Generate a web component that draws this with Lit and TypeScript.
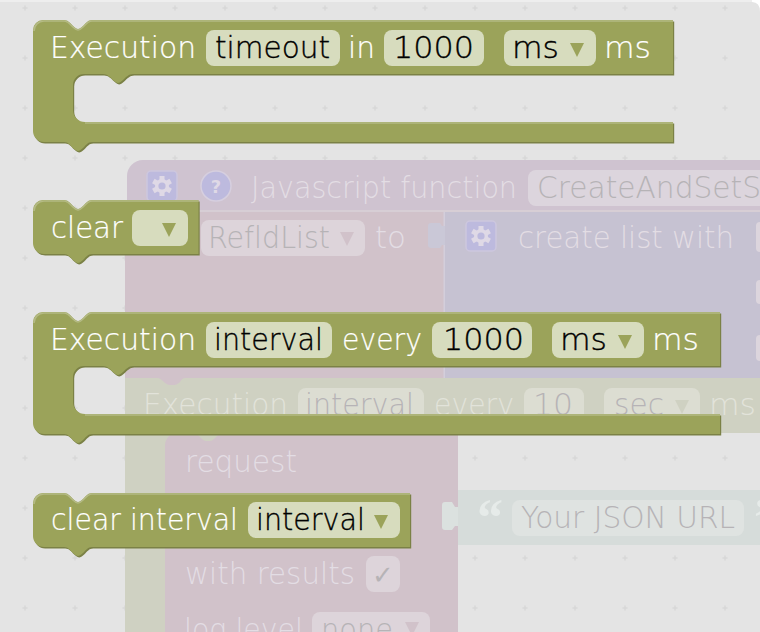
import { LitElement, html, css, svg } from "lit";
import { customElement } from "lit/decorators.js";

type Txt = [number, number, string, string, number];
type Fld = [number, number, string];

const topEdge = (y: number) =>
  `M33 ${y + 10} a10 10 0 0 1 10 -10 H64 c4 0 6 3 9 6 c2 2 4 3 5 3 c1 0 3 -1 5 -3 c3 -3 5 -6 9 -6`;
const bottomEdge = (y: number) =>
  `H92 c-4 0 -6 3 -9 6 c-2 2 -4 3 -5 3 c-1 0 -3 -1 -5 -3 c-3 -3 -5 -6 -9 -6 H44 a11 11 0 0 1 -11 -11 Z`;

const statementPath = (y: number, r: number) =>
  `${topEdge(y)} H${r} V${y + 54} H133 c-4 0 -7 3 -10 6 c-2 2 -4 3 -5 3 c-1 0 -3 -1 -5 -3 c-3 -3 -6 -6 -10 -6 H84 a11 11 0 0 0 -11 11 v25 a12 12 0 0 0 12 12 H${r} V${y + 122} ${bottomEdge(y + 122)}`;

const valuePath = (y: number, r: number) =>
  `${topEdge(y)} H${r} V${y + 54} ${bottomEdge(y + 54)}`;

const plusXs = Array.from({ length: 15 }, (_, i) => 25 + i * 50);
const plusYs = Array.from({ length: 13 }, (_, i) => 8 + i * 50);

const gear = (x: number, y: number) => svg`
  <rect class="badge" x=${x} y=${y} width="30" height="30" rx="4"></rect>
  <g transform="translate(${x + 15} ${y + 15})">
    ${[0, 60, 120].map((a) => svg`<rect class="gear-tooth" x="-2.5" y="-10" width="5" height="20" transform="rotate(${a})"></rect>`)}
    <circle class="gear-tooth" r="7"></circle>
    <circle class="gear-hole" r="3.6"></circle>
  </g>`;

const arrow = (x: number, y: number, cls: string) =>
  svg`<path class=${cls} d="M${x} ${y} h14 l-7 14 Z"></path>`;

const fields = (list: Fld[], y: number, h = 36) =>
  list.map(([x, w, cls]) => svg`<rect class=${cls} x=${x} y=${y} width=${w} height=${h} rx="8"></rect>`);

const texts = (list: Txt[]) =>
  list.map(
    ([x, y, t, cls, len]) =>
      svg`<text class=${cls} x=${x} y=${y} textLength=${len} lengthAdjust="spacingAndGlyphs">${t}</text>`,
  );

@customElement("app-root")
export class AppRoot extends LitElement {
  static styles = css`
    :host { display: block; width: 760px; height: 632px; overflow: hidden; background: #e4e4e4; }
    svg { display: block; }
    text { font-family: "DejaVu Sans", sans-serif; font-weight: 200; font-size: 29.5px; white-space: pre; font-variant-ligatures: none; }
    .bg { fill: #e4e4e4; }
    .top { fill: #eeeeee; }
    .corner { fill: #ffffff; }
    .plus { stroke: #d8d8d8; stroke-width: 1.4; fill: none; }
    .main { fill: #9ba35a; }
    .dark { fill: #7b8146; }
    .light { stroke: #b4ba84; stroke-width: 1.6; fill: none; }
    .fld { fill: #d7dcbe; }
    .arr { fill: #9ba35a; }
    .w { fill: #ffffff; stroke: #ffffff; stroke-width: 0.2; }
    .b { fill: #000000; stroke: #000000; stroke-width: 0.35; }
    .purple { fill: #cfc3d0; }
    .pink { fill: #d1c2ca; }
    .blue { fill: #c6c2d2; }
    .olive { fill: #cfd1c2; }
    .teal { fill: #d6dcda; }
    .seam { fill: #d7ced5; }
    .seam-b { fill: #d3cedb; }
    .plug { fill: #cac8d7; }
    .plug-t { fill: #dbe1df; }
    .badge { fill: #bdbade; stroke: #cdc7de; stroke-width: 1.5; }
    .gear-tooth { fill: #dfd9e6; }
    .gear-hole { fill: #bdbade; }
    .q { fill: #bdbade; stroke: #d6cfdf; stroke-width: 1.5; }
    text.qt { fill: #dfd9e6; font-weight: 700; font-size: 18px; }
    .fp { fill: #dcd5dd; }
    .fpk { fill: #ddd4da; }
    .fol { fill: #dcddd2; }
    .fte { fill: #dfe3e1; }
    .tp { fill: #e3dde4; }
    .to { fill: #e2e3da; }
    .tg { fill: #b6b3b6; }
    .ap { fill: #d1c2ca; }
    .ao { fill: #cfd1c2; }
    text.chk { fill: #b6b3b6; font-size: 26px; }
    text.qm { fill: #e6ebe9; font-size: 52px; font-family: "Liberation Serif", serif; font-weight: 700; }
  `;

  private block(d: string, lights: string) {
    return svg`
      <path class="dark" d=${d} transform="translate(1.2 1.5)"></path>
      <path class="main" d=${d}></path>
      <path class="light" d=${lights}></path>`;
  }

  private lightTop(y: number, r: number) {
    return `M34 ${y + 11} ${topEdge(y + 1).replace(/^M\S+ \S+ /, "")} H${r}`;
  }

  render() {
    return html`
      <svg width="760" height="632" viewBox="0 0 760 632" xmlns="http://www.w3.org/2000/svg">
        <rect class="bg" width="760" height="632"></rect>
        <rect class="top" width="760" height="2"></rect>
        <path class="corner" d="M752 0 H760 V12 Q760 2 752 2 Z"></path>
        ${plusYs.map((y) => plusXs.map((x) => svg`<path class="plus" d="M${x - 2.5} ${y}h5M${x} ${y - 2.5}v5"></path>`))}

        <!-- faded workspace blocks -->
        <path class="purple" d="M127 176 a16 16 0 0 1 16 -16 H760 V212 H127 Z"></path>
        <rect class="pink" x="125" y="210" width="320" height="180"></rect>
        <rect class="seam" x="125" y="210" width="635" height="2"></rect>
        <rect class="blue" x="445" y="212" width="315" height="166"></rect>
        <rect class="seam-b" x="443.5" y="212" width="1.5" height="166"></rect>
        <path class="plug" d="M445 226 h-3 l-2 -3 h-9 q-3 0 -3 3 v19 q0 3 3 3 h9 l2 -3 h3 Z"></path>
        <path class="olive" d="M125 378 H157 c3 0 5 2 8 5 c2 1 3 2 5 2 h4 c2 0 3 -1 5 -2 c2 -2 3 -5 6 -5 H760 V433 H458 V632 H125 Z"></path>
        <path class="pink" d="M165 446 a14 14 0 0 1 14 -14 H195 l7 7 q2 2 4 2 h4 q2 0 4 -2 l5 -5 H458 V632 H165 Z"></path>
        <path class="teal" d="M458 490 H760 V545 H458 Z"></path>
        <path class="plug-t" d="M458 507 h-3 l-3 -5 h-7 q-3 0 -3 3 v22 q0 3 3 3 h7 l3 -4 h3 Z"></path>

        ${gear(147, 171)}
        <circle class="q" cx="216" cy="186" r="15"></circle>
        <text class="qt" x="216" y="193" text-anchor="middle">?</text>
        ${gear(466, 221)}

        ${fields([[528, 240, "fp"]], 170)}
        ${fields([[201, 164, "fpk"]], 220)}
        <rect class="fp" x="756" y="222" width="12" height="30" rx="4"></rect>
        <rect class="fp" x="756" y="280" width="12" height="24" rx="4"></rect>
        <rect class="fp" x="756" y="335" width="12" height="26" rx="4"></rect>
        ${fields(
          [
            [298, 126, "fol"],
            [524, 60, "fol"],
            [604, 96, "fol"],
          ],
          388,
        )}
        ${fields([[366, 34, "fpk"]], 556)}
        ${fields([[312, 118, "fpk"]], 612)}
        ${fields([[512, 232, "fte"]], 500)}

        ${texts([
          [251, 198, "Javascript function", "tp", 266],
          [537, 198, "CreateAndSetS", "tg", 224],
          [208, 248, "RefldList", "tg", 122],
          [375, 248, "to", "tp", 31],
          [518, 248, "create list with", "tp", 216],
          [143, 415, "Execution", "to", 145],
          [305, 415, "interval", "tg", 109],
          [434, 415, "every", "to", 80],
          [533, 415, "10", "tg", 40],
          [614, 415, "sec", "tg", 50],
          [709, 415, "ms", "to", 47],
          [185, 472, "request", "tp", 112],
          [185, 584, "with results", "tp", 170],
          [184, 640, "log level", "tp", 119],
          [321, 640, "none", "tg", 72],
          [521, 528, "Your JSON URL", "tg", 214],
        ])}
        <text class="chk" x="372" y="584">✓</text>
        <text class="qm" x="477" y="535">“</text>
        <text class="qm" x="754" y="535">”</text>
        ${arrow(340, 232, "ap")}
        ${arrow(675, 400, "ao")}
        ${arrow(405, 622, "ap")}

        <!-- active blocks -->
        ${this.block(statementPath(20, 673), `${this.lightTop(20, 673)} M85 123 H673`)}
        ${fields(
          [
            [206, 134, "fld"],
            [384, 100, "fld"],
            [504, 92, "fld"],
          ],
          30,
        )}
        ${arrow(570, 43, "arr")}
        ${texts([
          [50, 58, "Execution", "w", 146],
          [215, 58, "timeout", "b", 115],
          [348, 58, "in", "w", 27],
          [393, 58, "1000", "b", 81],
          [512, 58, "ms", "b", 47],
          [604, 58, "ms", "w", 47],
        ])}

        ${this.block(valuePath(200, 198.5), `${this.lightTop(200, 198.5)}`)}
        ${fields([[132, 56, "fld"]], 210)}
        ${arrow(162, 223, "arr")}
        ${texts([[51, 238, "clear", "w", 72]])}

        ${this.block(statementPath(312, 720), `${this.lightTop(312, 720)} M85 415 H720`)}
        ${fields(
          [
            [206, 126, "fld"],
            [432, 100, "fld"],
            [552, 92, "fld"],
          ],
          322,
        )}
        ${arrow(618, 335, "arr")}
        ${texts([
          [50, 350, "Execution", "w", 146],
          [214, 350, "interval", "b", 109],
          [342, 350, "every", "w", 80],
          [443, 350, "1000", "b", 81],
          [560, 350, "ms", "b", 47],
          [652, 350, "ms", "w", 47],
        ])}

        ${this.block(valuePath(493, 410), `${this.lightTop(493, 410)}`)}
        ${fields([[248, 152, "fld"]], 502)}
        ${arrow(374, 515, "arr")}
        ${texts([
          [51, 530, "clear interval", "w", 187],
          [256, 530, "interval", "b", 109],
        ])}
      </svg>
    `;
  }
}
